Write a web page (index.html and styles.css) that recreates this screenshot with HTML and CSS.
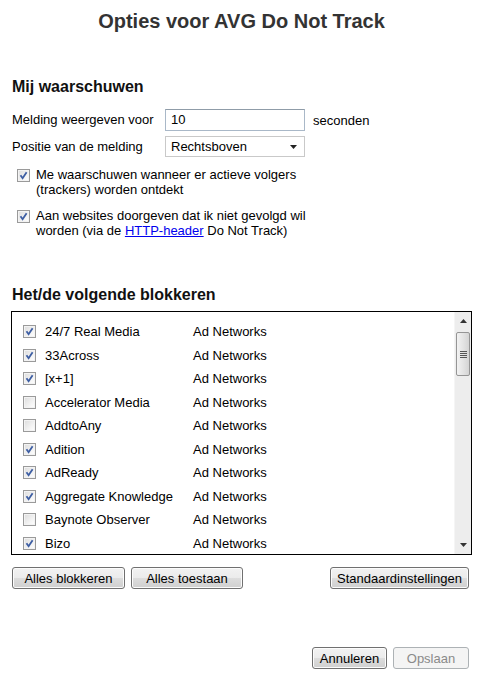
FILE: index.html
```html
<!DOCTYPE html>
<html lang="nl">
<head>
<meta charset="utf-8">
<title>Opties voor AVG Do Not Track</title>
<link rel="stylesheet" href="styles.css">
</head>
<body>
<div class="page">
  <h1 class="title">Opties voor AVG Do Not Track</h1>

  <h2 class="heading heading-warn">Mij waarschuwen</h2>
  <div class="form-grid">
    <span class="label">Melding weergeven voor</span>
    <span class="textbox">10</span>
    <span class="unit">seconden</span>
    <span class="label">Positie van de melding</span>
    <span class="selectbox">Rechtsboven<svg class="sel-arrow" width="7" height="4" viewBox="0 0 7 4"><path d="M0 0H7L3.5 4Z" fill="#222"/></svg></span>
    <span></span>
  </div>

  <div class="opt">
    <span class="cb on"><svg viewBox="0 0 13 13" width="13" height="13"><path d="M3.5 6.2 5.6 9.2 9.6 3.2" fill="none" stroke="#3d5ea3" stroke-width="1.8"/></svg></span>
    <p class="opt-text">Me waarschuwen wanneer er actieve volgers<br>(trackers) worden ontdekt</p>
  </div>
  <div class="opt">
    <span class="cb on"><svg viewBox="0 0 13 13" width="13" height="13"><path d="M3.5 6.2 5.6 9.2 9.6 3.2" fill="none" stroke="#3d5ea3" stroke-width="1.8"/></svg></span>
    <p class="opt-text">Aan websites doorgeven dat ik niet gevolgd wil<br>worden (via de <a class="link" href="#">HTTP-header</a> Do Not Track)</p>
  </div>

  <h2 class="heading heading-block">Het/de volgende blokkeren</h2>
  <div class="listbox">
    <div class="rows">
      <div class="row"><span class="cb on"><svg viewBox="0 0 13 13" width="13" height="13"><path d="M3.5 6.2 5.6 9.2 9.6 3.2" fill="none" stroke="#3d5ea3" stroke-width="1.8"/></svg></span><span class="name">24/7 Real Media</span><span class="cat">Ad Networks</span></div>
      <div class="row"><span class="cb on"><svg viewBox="0 0 13 13" width="13" height="13"><path d="M3.5 6.2 5.6 9.2 9.6 3.2" fill="none" stroke="#3d5ea3" stroke-width="1.8"/></svg></span><span class="name">33Across</span><span class="cat">Ad Networks</span></div>
      <div class="row"><span class="cb on"><svg viewBox="0 0 13 13" width="13" height="13"><path d="M3.5 6.2 5.6 9.2 9.6 3.2" fill="none" stroke="#3d5ea3" stroke-width="1.8"/></svg></span><span class="name">[x+1]</span><span class="cat">Ad Networks</span></div>
      <div class="row"><span class="cb"></span><span class="name">Accelerator Media</span><span class="cat">Ad Networks</span></div>
      <div class="row"><span class="cb"></span><span class="name">AddtoAny</span><span class="cat">Ad Networks</span></div>
      <div class="row"><span class="cb on"><svg viewBox="0 0 13 13" width="13" height="13"><path d="M3.5 6.2 5.6 9.2 9.6 3.2" fill="none" stroke="#3d5ea3" stroke-width="1.8"/></svg></span><span class="name">Adition</span><span class="cat">Ad Networks</span></div>
      <div class="row"><span class="cb on"><svg viewBox="0 0 13 13" width="13" height="13"><path d="M3.5 6.2 5.6 9.2 9.6 3.2" fill="none" stroke="#3d5ea3" stroke-width="1.8"/></svg></span><span class="name">AdReady</span><span class="cat">Ad Networks</span></div>
      <div class="row"><span class="cb on"><svg viewBox="0 0 13 13" width="13" height="13"><path d="M3.5 6.2 5.6 9.2 9.6 3.2" fill="none" stroke="#3d5ea3" stroke-width="1.8"/></svg></span><span class="name">Aggregate Knowledge</span><span class="cat">Ad Networks</span></div>
      <div class="row"><span class="cb"></span><span class="name">Baynote Observer</span><span class="cat">Ad Networks</span></div>
      <div class="row"><span class="cb on"><svg viewBox="0 0 13 13" width="13" height="13"><path d="M3.5 6.2 5.6 9.2 9.6 3.2" fill="none" stroke="#3d5ea3" stroke-width="1.8"/></svg></span><span class="name">Bizo</span><span class="cat">Ad Networks</span></div>
    </div>
    <div class="scrollbar">
      <div class="sb-btn"><svg width="7" height="4" viewBox="0 0 7 4"><path d="M3.5 0 7 4H0Z" fill="#333"/></svg></div>
      <div class="sb-track">
        <div class="sb-thumb"><span class="grip"></span><span class="grip"></span><span class="grip"></span><span class="grip"></span></div>
      </div>
      <div class="sb-btn"><svg width="7" height="4" viewBox="0 0 7 4"><path d="M0 0H7L3.5 4Z" fill="#333"/></svg></div>
    </div>
  </div>

  <div class="btn-row">
    <button class="btn btn-block">Alles blokkeren</button>
    <button class="btn btn-allow">Alles toestaan</button>
    <span class="spacer"></span>
    <button class="btn btn-default">Standaardinstellingen</button>
  </div>

  <div class="footer">
    <button class="btn btn-cancel">Annuleren</button>
    <button class="btn btn-save" disabled>Opslaan</button>
  </div>
</div>
</body>
</html>
```
FILE: styles.css
```css
* { box-sizing: border-box; }
html, body { margin: 0; padding: 0; background: #fff; }
body {
  font-family: "Liberation Sans", Arial, sans-serif;
  font-size: 13px;
  color: #000;
}
.page {
  width: 481px;
  height: 679px;
  padding: 0 10px 0 12px;
  display: flex;
  flex-direction: column;
}
.title {
  margin: 9px 0 0 0;
  font-size: 20px;
  line-height: 24px;
  font-weight: bold;
  color: #333;
  text-align: center;
}
.heading {
  margin: 0;
  font-size: 16px;
  line-height: 20px;
  font-weight: bold;
  color: #111;
}
.heading-warn { margin-top: 44px; }
.form-grid {
  margin-top: 12px;
  display: grid;
  grid-template-columns: 145px 140px auto;
  column-gap: 8px;
  row-gap: 5px;
  align-items: center;
}
.label { line-height: 16px; }
.textbox {
  height: 22px;
  border: 1px solid #a9b8c8;
  border-top-color: #8f9ca8;
  padding: 0 5px;
  line-height: 20px;
  font-size: 13px;
}
.selectbox {
  height: 21px;
  border: 1px solid #c9c9c9;
  padding: 0 5px;
  line-height: 19px;
  display: flex;
  align-items: center;
  justify-content: space-between;
}
.sel-arrow { margin-right: 2px; }
.opt {
  margin-top: 10px;
  padding-left: 5px;
  display: flex;
  align-items: flex-start;
  gap: 6px;
  width: 340px;
}
.opt + .opt { margin-top: 11px; }
.opt .cb { margin-top: 2px; }
.opt-text { margin: 0; line-height: 15px; }
.link { color: #0000ee; text-decoration: underline; }
.cb {
  width: 13px;
  height: 13px;
  flex: none;
  border: 1px solid #9a9a9a;
  background: linear-gradient(135deg, #dcdcdc 0%, #f6f6f6 70%, #ffffff 100%);
  box-shadow: inset 0 0 0 1px #f3f3f3;
  position: relative;
}
.cb svg { position: absolute; left: -1px; top: -1px; }
.heading-block { margin-top: 47px; }
.listbox {
  margin-top: 6px;
  margin-left: -1px;
  width: 461px;
  height: 244px;
  border: 1px solid #000;
  display: flex;
}
.rows {
  flex: 1;
  padding-top: 8px;
  overflow: hidden;
}
.row {
  height: 23.5px;
  display: flex;
  align-items: center;
  padding-left: 11px;
}
.row .name { margin-left: 9px; width: 148px; }
.scrollbar {
  width: 17px;
  display: flex;
  flex-direction: column;
  background: #ededed;
  border-left: 1px solid #f5f5f5;
}
.sb-btn {
  height: 18px;
  display: flex;
  align-items: center;
  justify-content: center;
}
.sb-track { flex: 1; padding: 2px 1px 0 1px; }
.sb-thumb {
  height: 44px;
  border: 1px solid #959595;
  border-radius: 2px;
  background: linear-gradient(90deg, #f2f2f2 0%, #e4e4e4 50%, #d4d4d4 100%);
  display: flex;
  flex-direction: column;
  align-items: center;
  justify-content: center;
  gap: 1px;
}
.grip { width: 7px; height: 1px; background: #555; }
.btn-row {
  margin-top: 12px;
  display: flex;
  gap: 6px;
  padding-right: 2px;
}
.spacer { flex: 1; }
.btn {
  height: 22px;
  margin: 0;
  padding: 0 6px;
  font-family: "Liberation Sans", Arial, sans-serif;
  font-size: 13px;
  color: #000;
  border: 1px solid #707070;
  border-radius: 3px;
  background: linear-gradient(180deg, #f2f2f2 0%, #ebebeb 50%, #dddddd 51%, #cfcfcf 100%);
  box-shadow: inset 0 0 0 1px #fcfcfc;
}
.btn-block { width: 113px; }
.btn-allow { width: 112px; }
.btn-default { width: 139px; }
.footer {
  margin-top: auto;
  margin-bottom: 10px;
  padding-right: 2px;
  display: flex;
  justify-content: flex-end;
  gap: 6px;
}
.btn-cancel { width: 75px; }
.btn-save {
  width: 76px;
  color: #8a8a8a;
  border-color: #adb2b5;
  background: #f4f4f4;
  box-shadow: none;
}
```
